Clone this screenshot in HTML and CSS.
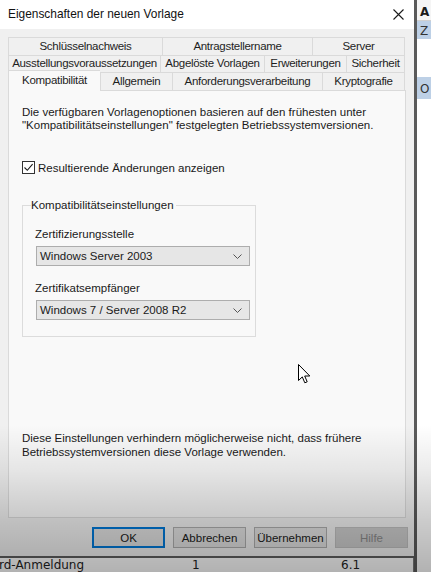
FILE: index.html
```html
<!DOCTYPE html>
<html lang="de">
<head>
<meta charset="utf-8">
<title>Eigenschaften der neuen Vorlage</title>
<link rel="stylesheet" href="styles.css">
</head>
<body>
<div class="screen">
  <div class="left">
    <div class="dialog">
      <div class="titlebar">
        <span class="title">Eigenschaften der neuen Vorlage</span>
        <svg class="close" width="11" height="11" viewBox="0 0 11 11"><path d="M0.5 0.5 L10.5 10.5 M10.5 0.5 L0.5 10.5" stroke="#1a1a1a" stroke-width="1.1" fill="none"/></svg>
      </div>
      <div class="body">
        <div class="tabs">
          <div class="tabrow row1">
            <div class="tab">Schlüsselnachweis</div>
            <div class="tab">Antragstellername</div>
            <div class="tab">Server</div>
          </div>
          <div class="tabrow row2">
            <div class="tab">Ausstellungsvoraussetzungen</div>
            <div class="tab">Abgelöste Vorlagen</div>
            <div class="tab">Erweiterungen</div>
            <div class="tab">Sicherheit</div>
          </div>
          <div class="tabrow row3">
            <div class="tab selected">Kompatibilität</div>
            <div class="tab">Allgemein</div>
            <div class="tab">Anforderungsverarbeitung</div>
            <div class="tab">Kryptografie</div>
          </div>
        </div>
        <div class="panel">
          <p class="info">Die verfügbaren Vorlagenoptionen basieren auf den frühesten unter<br>"Kompatibilitätseinstellungen" festgelegten Betriebssystemversionen.</p>
          <label class="check">
            <span class="box"><svg width="11" height="11" viewBox="0 0 11 11"><path d="M1.5 5.5 L4.3 8.3 L9.6 2.2" stroke="#1a1a1a" stroke-width="1.1" fill="none"/></svg></span>
            <span>Resultierende Änderungen anzeigen</span>
          </label>
          <fieldset class="group">
            <legend>Kompatibilitätseinstellungen</legend>
            <div class="fieldlabel">Zertifizierungsstelle</div>
            <div class="select"><span>Windows Server 2003</span><svg width="9" height="5" viewBox="0 0 9 5"><path d="M0.5 0.5 L4.5 4.5 L8.5 0.5" stroke="#555" stroke-width="1" fill="none"/></svg></div>
            <div class="fieldlabel">Zertifikatsempfänger</div>
            <div class="select"><span>Windows 7 / Server 2008 R2</span><svg width="9" height="5" viewBox="0 0 9 5"><path d="M0.5 0.5 L4.5 4.5 L8.5 0.5" stroke="#555" stroke-width="1" fill="none"/></svg></div>
          </fieldset>
          <p class="note">Diese Einstellungen verhindern möglicherweise nicht, dass frühere<br>Betriebssystemversionen diese Vorlage verwenden.</p>
        </div>
        <div class="buttons">
          <button class="btn default">OK</button>
          <button class="btn">Abbrechen</button>
          <button class="btn">Übernehmen</button>
          <button class="btn disabled">Hilfe</button>
        </div>
      </div>
    </div>
    <div class="listrow">
      <span class="c1">rd-Anmeldung</span>
      <span class="c2">1</span>
      <span class="c3">6.1</span>
    </div>
  </div>
  <div class="right">
    <div class="rhead">A</div>
    <div class="ritem sel">Z</div>
    <div class="ritem blank"></div>
    <div class="ritem sel tall">O</div>
  </div>
  <div class="shade"></div>
  <svg class="cursor" width="13" height="21" viewBox="0 0 13 21"><path d="M0.5 0.5 L0.5 16.5 L4.3 12.9 L6.8 18.8 L9.2 17.8 L6.7 12 L11.8 12 Z" fill="#fff" stroke="#000" stroke-width="1"/></svg>
</div>
</body>
</html>
```
FILE: styles.css
```css
* { box-sizing: border-box; }
html, body { margin: 0; padding: 0; }
body {
  width: 431px;
  height: 572px;
  overflow: hidden;
  font-family: "Liberation Sans", Arial, sans-serif;
  font-size: 11.5px;
  color: #1a1a1a;
  background: #ffffff;
}
.screen {
  position: relative;
  width: 431px;
  height: 572px;
  display: grid;
  grid-template-columns: 414px 1fr;
}
.left {
  display: flex;
  flex-direction: column;
  background: #ffffff;
}
.dialog {
  height: 558px;
  background: #f0f0f0;
  border-bottom: 2px solid #5e5e5e;
  display: flex;
  flex-direction: column;
}
.titlebar {
  height: 29px;
  background: #ffffff;
  display: flex;
  align-items: center;
  justify-content: space-between;
  padding: 0 10px 2px 8px;
}
.title {
  font-size: 11.9px;
  color: #111;
}
.close { margin-top: 1px; }
.body {
  flex: 1;
  display: flex;
  flex-direction: column;
  padding: 8px 0 0 8px;
}
.tabs { display: flex; flex-direction: column; }
.tabrow {
  display: grid;
  width: 397px;
}
.row1 { grid-template-columns: 154px 150px 93px; height: 18px; }
.row2 { grid-template-columns: 152px 104px 82px 59px; height: 17px; }
.row3 { grid-template-columns: 92px 72px 150px 83px; height: 18px; }
.tab {
  border: 1px solid #dadada;
  border-right: none;
  border-bottom: none;
  display: flex;
  align-items: center;
  justify-content: center;
  white-space: nowrap;
  color: #1e1e1e;
  background: #f0f0f0;
  line-height: 1;
  letter-spacing: -0.3px;
}
.tab:last-child { border-right: 1px solid #dadada; }
.row3 .tab { padding-bottom: 1px; }
.tab.selected {
  background: #f9f9f9;
  margin-top: -2px;
  height: 21px;
  position: relative;
  z-index: 1;
  border-color: #dadada;
  border-bottom: none;
  align-items: flex-start;
  padding-top: 4px;
}
.panel {
  width: 398px;
  height: 428px;
  background: #f9f9f9;
  border: 1px solid #dadada;
  display: flex;
  flex-direction: column;
  padding: 0 0 0 13px;
}
.info {
  margin: 15px 0 0 0;
  line-height: 13px;
}
.check {
  display: flex;
  align-items: center;
  margin-top: 29px;
  height: 13px;
  gap: 3px;
}
.box {
  width: 13px;
  height: 13px;
  border: 1px solid #333;
  background: #fff;
  display: flex;
  align-items: center;
  justify-content: center;
}
.group {
  margin: 24px 0 0 0;
  width: 234px;
  border: 1px solid #dcdcdc;
  padding: 0 12px 16px 12px;
  min-width: 0;
}
.group legend {
  padding: 0 2px 0 0;
  margin-left: -4px;
  line-height: 14px;
}
.fieldlabel {
  line-height: 14px;
  margin-top: 15px;
}
.select {
  margin: 5px 0 0 1px;
  width: 214px;
  height: 20px;
  background: #e6e6e6;
  border: 1px solid #adadad;
  display: flex;
  align-items: center;
  justify-content: space-between;
  padding: 0 7px 0 3px;
}
.note {
  margin: auto 0 58px 0;
  line-height: 14px;
}
.buttons {
  display: flex;
  justify-content: flex-end;
  gap: 8px;
  margin-top: 9px;
  padding-right: 6px;
}
.btn {
  width: 73px;
  height: 21px;
  font-family: inherit;
  font-size: 11.5px;
  color: #1a1a1a;
  background: #e1e1e1;
  border: 1px solid #adadad;
  padding: 0;
}
.btn.default { border: 2px solid #0078d7; }
.btn.disabled {
  background: #cccccc;
  border-color: #bfbfbf;
  color: #8a8a8a;
}
.listrow {
  flex: 1;
  position: relative;
  background: #ffffff;
  border-right: 1px solid #777;
  font-family: "DejaVu Sans", sans-serif;
  font-size: 12px;
  color: #222;
  display: flex;
  align-items: center;
  line-height: 1;
}
.c1 { margin-left: -1px; width: 193px; }
.c2 { width: 149px; }
.right {
  border-left: 3px solid #5a5a5a;
  background: #ffffff;
  display: flex;
  flex-direction: column;
}
.rhead {
  height: 21px;
  background: #f5f5f5;
  border-bottom: 1px solid #d0d0d0;
  font-weight: bold;
  padding: 5px 0 0 3px;
  font-family: "DejaVu Sans", sans-serif;
  font-size: 12px;
}
.ritem {
  height: 18px;
  padding: 3px 0 0 3px;
  font-family: "DejaVu Sans", sans-serif;
  font-size: 12px;
  color: #333;
}
.ritem.sel { background: #bdd0e6; }
.ritem.blank { height: 38px; }
.ritem.tall { height: 22px; padding-top: 5px; }
.shade {
  position: absolute;
  left: 0;
  top: 0;
  width: 431px;
  height: 572px;
  pointer-events: none;
  background: linear-gradient(to bottom,
    rgba(0,0,0,0) 0px,
    rgba(0,0,0,0) 425px,
    rgba(0,0,0,0.08) 470px,
    rgba(0,0,0,0.2) 520px,
    rgba(0,0,0,0.3) 572px);
}
.cursor {
  position: absolute;
  left: 298px;
  top: 364px;
}
```
